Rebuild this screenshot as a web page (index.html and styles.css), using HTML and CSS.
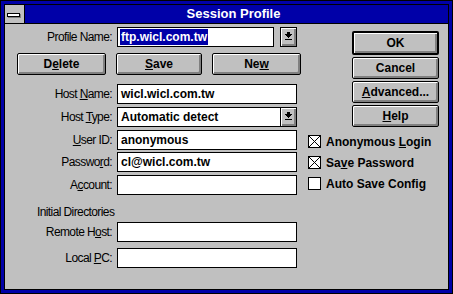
FILE: index.html
```html
<!DOCTYPE html>
<html>
<head>
<meta charset="utf-8">
<link rel="stylesheet" href="styles.css">
</head>
<body>
<div class="window">
  <div class="frame">
    <div class="titlebar">
      <div class="sysmenu"><span class="sysbar"></span></div>
      <div class="title">Session Profile</div>
    </div>
    <div class="client">
      <div class="left">
        <div class="row row-profile">
          <span class="lbl">Profile Name:</span>
          <div class="field field-profile"><span class="sel">ftp.wicl.com.tw</span></div>
          <div class="dropbtn">
            <svg width="7" height="9" viewBox="0 0 7 9" shape-rendering="crispEdges"><rect x="2" y="0" width="3" height="2" fill="#000"/><rect x="0" y="2" width="7" height="1" fill="#000"/><rect x="1" y="3" width="5" height="1" fill="#000"/><rect x="2" y="4" width="3" height="1" fill="#000"/><rect x="3" y="5" width="1" height="1" fill="#000"/><rect x="0" y="7" width="7" height="1" fill="#000"/></svg>
          </div>
        </div>
        <div class="btnrow">
          <div class="btn btn-delete">D<u>e</u>lete</div>
          <div class="btn btn-save"><u>S</u>ave</div>
          <div class="btn btn-new">Ne<u>w</u></div>
        </div>
        <div class="fields">
          <div class="row"><span class="lbl">Host <u>N</u>ame:</span><div class="field">wicl.wicl.com.tw</div></div>
          <div class="row"><span class="lbl">Host <u>T</u>ype:</span><div class="field combo">Automatic detect<div class="dropbtn inner">
            <svg width="7" height="9" viewBox="0 0 7 9" shape-rendering="crispEdges"><rect x="2" y="0" width="3" height="2" fill="#000"/><rect x="0" y="2" width="7" height="1" fill="#000"/><rect x="1" y="3" width="5" height="1" fill="#000"/><rect x="2" y="4" width="3" height="1" fill="#000"/><rect x="3" y="5" width="1" height="1" fill="#000"/><rect x="0" y="7" width="7" height="1" fill="#000"/></svg>
          </div></div></div>
          <div class="row"><span class="lbl"><u>U</u>ser ID:</span><div class="field">anonymous</div></div>
          <div class="row tight"><span class="lbl">Passwo<u>r</u>d:</span><div class="field">cl@wicl.com.tw</div></div>
          <div class="row"><span class="lbl">A<u>c</u>count:</span><div class="field"></div></div>
        </div>
        <div class="section">Initial Directories</div>
        <div class="fields dirs">
          <div class="row"><span class="lbl">Remote H<u>o</u>st:</span><div class="field"></div></div>
          <div class="row"><span class="lbl">Local <u>P</u>C:</span><div class="field"></div></div>
        </div>
      </div>
      <div class="right">
        <div class="btncol">
          <div class="btn btn-side default">OK</div>
          <div class="btn btn-side">Cancel</div>
          <div class="btn btn-side"><u>A</u>dvanced...</div>
          <div class="btn btn-side"><u>H</u>elp</div>
        </div>
        <div class="checks">
          <div class="check"><span class="box checked"></span><span>Anonymous <u>L</u>ogin</span></div>
          <div class="check"><span class="box checked"></span><span>Sa<u>v</u>e Password</span></div>
          <div class="check"><span class="box"></span><span>Auto Save Config</span></div>
        </div>
      </div>
    </div>
  </div>
</div>
</body>
</html>
```

FILE: styles.css
```css
* { box-sizing: border-box; }
html, body { margin: 0; padding: 0; background: #000; }
body { width: 453px; height: 294px; overflow: hidden; }

.window {
  width: 453px;
  height: 294px;
  border: 1px solid #000;
  background: #0000a8;
  padding: 3px;
}
.frame {
  width: 100%;
  height: 100%;
  border: 1px solid #000;
  background: #c0c0c0;
  display: flex;
  flex-direction: column;
}
.titlebar {
  height: 19px;
  display: flex;
  background: #0000a8;
  border-bottom: 1px solid #000;
}
.sysmenu {
  width: 20px;
  height: 18px;
  background: #c0c0c0;
  border-right: 1px solid #000;
  display: flex;
  align-items: center;
  justify-content: center;
}
.sysbar {
  display: block;
  width: 13px;
  height: 4px;
  background: #fff;
  border: 1px solid #000;
  box-shadow: 1px 1px 0 #808080;
  margin-left: -2px;
  margin-top: 1px;
}
.title {
  flex: 1;
  text-align: center;
  color: #fff;
  font-family: "Liberation Sans", Arial, sans-serif;
  font-weight: bold;
  font-size: 13px;
  line-height: 18px;
  padding-right: 6px;
}

.client {
  flex: 1;
  display: flex;
  font-family: "Liberation Sans", Arial, sans-serif;
  font-size: 12px;
  color: #000;
}
.left {
  width: 300px;
  padding-top: 3px;
}
.row {
  display: flex;
  align-items: center;
  height: 20px;
}
.lbl {
  width: 107px;
  margin-right: 5px;
  text-align: right;
  font-family: "Liberation Sans", Arial, sans-serif;
  font-size: 12px;
  letter-spacing: -0.6px;
  font-weight: normal;
  white-space: nowrap;
}
.field {
  width: 180px;
  height: 20px;
  background: #fff;
  border: 1px solid #000;
  font-weight: bold;
  font-size: 12px;
  line-height: 18px;
  padding-left: 3px;
  white-space: nowrap;
  position: relative;
}
.field-profile {
  width: 157px;
  padding-left: 2px;
  padding-top: 1px;
}
.sel {
  display: inline-block;
  background: #0000a8;
  color: #fff;
  padding: 0 1px;
  line-height: 16px;
  vertical-align: top;
}
.dropbtn {
  width: 17px;
  height: 20px;
  margin-left: 6px;
  background: #c0c0c0;
  border: 1px solid #000;
  box-shadow: inset 1px 1px 0 #fff, inset -1px -1px 0 #808080, inset -2px -2px 0 #808080;
  display: flex;
  align-items: center;
  justify-content: center;
  padding-bottom: 1px;
}
.combo { display: flex; justify-content: space-between; }
.dropbtn.inner {
  margin: -1px -1px -1px 0;
  height: 20px;
}

.btnrow {
  display: flex;
  gap: 10px;
  margin-top: 6px;
  padding-left: 12px;
}
.btn {
  height: 22px;
  background: #c0c0c0;
  border: 1px solid #000;
  border-radius: 2px;
  box-shadow: inset 1px 1px 0 #fff, inset -1px -1px 0 #808080, inset -2px -2px 0 #808080;
  font-family: "Liberation Sans", Arial, sans-serif;
  font-weight: bold;
  font-size: 12px;
  display: flex;
  align-items: center;
  justify-content: center;
  padding-bottom: 1px;
}
.btn-delete { width: 89px; }
.btn-save { width: 86px; }
.btn-new { width: 89px; }

.fields { margin-top: 9px; }
.fields .row + .row { margin-top: 3px; }
.fields .row.tight { margin-top: 2px; }

.section {
  font-family: "Liberation Sans", Arial, sans-serif;
  font-size: 12px;
  letter-spacing: -0.6px;
  padding-left: 32px;
  margin-top: 9px;
  line-height: 16px;
}
.fields.dirs { margin-top: 2px; }
.fields.dirs .row + .row { margin-top: 6px; }

.right {
  flex: 1;
  padding-left: 3px;
  padding-top: 7px;
}
.btncol {
  display: flex;
  flex-direction: column;
  align-items: flex-end;
  gap: 2px;
  padding-right: 9px;
}
.btn-side { width: 87px; }
.btn-side.default {
  height: 24px;
  border-width: 2px;
}
.checks {
  margin-top: 8px;
  display: flex;
  flex-direction: column;
  gap: 8px;
}
.check {
  display: flex;
  align-items: center;
  height: 13px;
  font-weight: bold;
  font-size: 12px;
  gap: 5px;
}
.box {
  width: 13px;
  height: 13px;
  border: 1px solid #000;
  background: #fff;
}
.box.checked {
  background:
    linear-gradient(45deg, transparent calc(50% - 0.6px), #000 calc(50% - 0.6px), #000 calc(50% + 0.6px), transparent calc(50% + 0.6px)),
    linear-gradient(-45deg, transparent calc(50% - 0.6px), #000 calc(50% - 0.6px), #000 calc(50% + 0.6px), transparent calc(50% + 0.6px)),
    #fff;
}
u { text-decoration: underline; text-underline-offset: 1px; }
```
